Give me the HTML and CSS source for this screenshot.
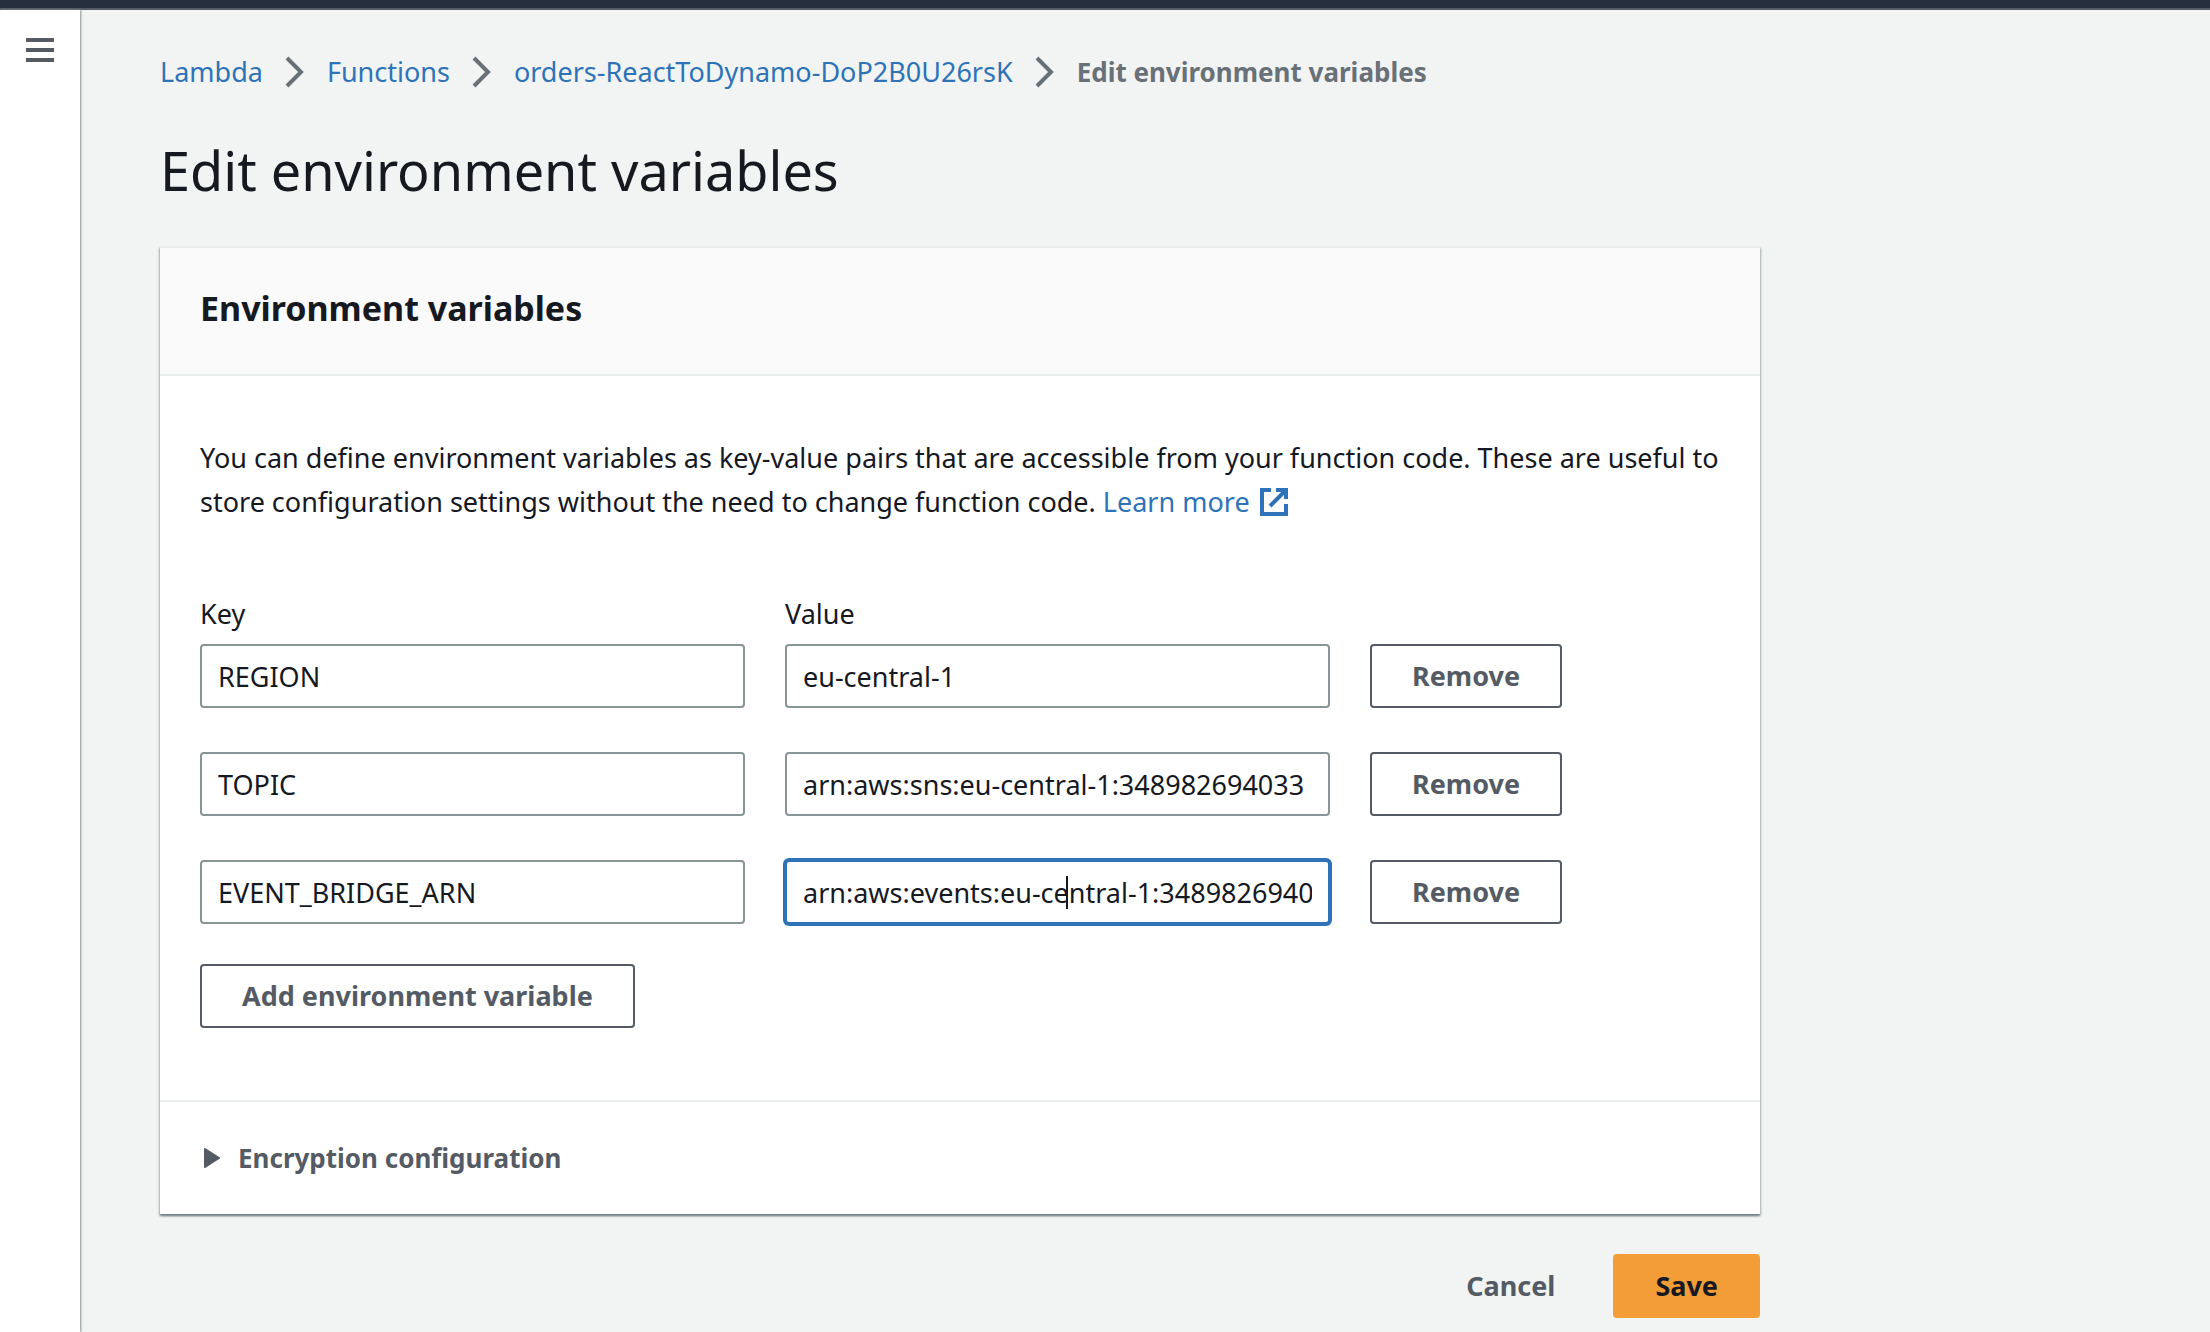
FILE: index.html
```html
<!DOCTYPE html>
<html lang="en">
<head>
<meta charset="utf-8">
<title>Edit environment variables - Lambda</title>
<link rel="stylesheet" href="styles.css">
</head>
<body>
<header class="topbar"></header>
<div class="layout">
  <nav class="sidebar" aria-label="Navigation">
    <button class="menu-button" type="button" aria-label="Open navigation">
      <svg width="28" height="24" viewBox="0 0 28 24"><path d="M0 2H28M0 12H28M0 22H28" stroke="currentColor" stroke-width="4"/></svg>
    </button>
  </nav>
  <main class="main">
    <nav class="breadcrumbs" aria-label="Breadcrumbs">
      <a href="#">Lambda</a>
      <svg class="chevron" viewBox="0 0 20 32"><path d="M2 2L16 16L2 30" fill="none" stroke="currentColor" stroke-width="4"/></svg>
      <a href="#">Functions</a>
      <svg class="chevron" viewBox="0 0 20 32"><path d="M2 2L16 16L2 30" fill="none" stroke="currentColor" stroke-width="4"/></svg>
      <a href="#">orders-ReactToDynamo-DoP2B0U26rsK</a>
      <svg class="chevron" viewBox="0 0 20 32"><path d="M2 2L16 16L2 30" fill="none" stroke="currentColor" stroke-width="4"/></svg>
      <span class="current">Edit environment variables</span>
    </nav>
    <h1>Edit environment variables</h1>
    <form class="form">
      <section class="card">
        <div class="card-header"><h2>Environment variables</h2></div>
        <div class="card-body">
          <p class="intro">You can define environment variables as key-value pairs that are accessible from your function code. These are useful to store configuration settings without the need to change function code. <a href="#">Learn more<svg class="external" viewBox="0 0 28 28"><path d="M11 2H2V26H26V16M16 2H26V11M10 18L26 2" fill="none" stroke="currentColor" stroke-width="4"/></svg></a></p>
          <div class="variables">
            <div class="row">
              <div class="field"><label for="key1">Key</label><input id="key1" type="text" value="REGION"></div>
              <div class="field"><label for="value1">Value</label><input id="value1" type="text" value="eu-central-1"></div>
              <button class="button" type="button">Remove</button>
            </div>
            <div class="row">
              <div class="field"><input aria-label="Key" type="text" value="TOPIC"></div>
              <div class="field"><input aria-label="Value" type="text" value="arn:aws:sns:eu-central-1:348982694033"></div>
              <button class="button" type="button">Remove</button>
            </div>
            <div class="row">
              <div class="field"><input aria-label="Key" type="text" value="EVENT_BRIDGE_ARN"></div>
              <div class="field"><input class="focused" aria-label="Value" type="text" value="arn:aws:events:eu-central-1:348982694033"><span class="caret"></span></div>
              <button class="button" type="button">Remove</button>
            </div>
          </div>
          <button class="button" type="button">Add environment variable</button>
        </div>
        <div class="card-footer">
          <button class="expander" type="button" aria-expanded="false"><svg class="triangle" viewBox="0 0 16 20"><path d="M1 1L15 10L1 19Z" fill="currentColor" stroke="currentColor" stroke-width="2" stroke-linejoin="round"/></svg>Encryption configuration</button>
        </div>
      </section>
      <div class="actions">
        <button class="button link" type="button">Cancel</button>
        <button class="button primary" type="button">Save</button>
      </div>
    </form>
  </main>
</div>
</body>
</html>
```
FILE: styles.css
```css
* { box-sizing: border-box; }
body {
  margin: 0;
  min-height: 100vh;
  display: flex;
  flex-direction: column;
  background: #f2f3f3;
  color: #16191f;
  font-family: "Noto Sans", "Open Sans", sans-serif;
  font-size: 27px;
  line-height: 44px;
}
a { color: #2e73b8; text-decoration: none; }
button, input { font: inherit; color: inherit; margin: 0; }
svg { display: block; flex: none; }
h1, h2, p { margin: 0; }
.topbar { height: 10px; background: #262f3d; border-bottom: 2px solid #545b64; }
.layout { display: flex; flex: 1; }
.sidebar { flex: none; width: 80px; padding: 28px 26px; background: #fff; box-shadow: 1px 0 2px #879596; }
.menu-button { display: block; padding: 0; border: 0; background: none; color: #545b64; }
.main { flex: 1; min-width: 0; padding: 40px 80px 12px; }
.breadcrumbs { display: flex; align-items: center; gap: 22px; }
.chevron { width: 20px; height: 32px; color: #687078; }
.current { color: #687078; font-size: 26px; font-weight: 700; }
h1 { margin: 40px 0; font-size: 54px; line-height: 72px; font-weight: 400; }
.form { max-width: 1600px; }
.card { background: #fff; border-top: 2px solid #eaeded; box-shadow: 0 2px 2px rgba(0, 28, 36, .3), 1px 2px 2px rgba(0, 28, 36, .2), -1px 2px 2px rgba(0, 28, 36, .2); }
.card-header { padding: 40px 40px 46px; background: #fafafa; border-bottom: 2px solid #eaeded; }
h2 { font-size: 34px; line-height: 40px; font-weight: 700; }
.card-body { padding: 60px 40px 72px; }
.external { display: inline-block; width: 28px; height: 28px; margin-left: 10px; vertical-align: -4px; }
.variables { display: grid; gap: 44px; padding: 68px 0 40px; }
.row { display: grid; grid-template-columns: 109fr 109fr 70fr; gap: 40px; align-items: end; justify-items: start; }
.field { position: relative; width: 100%; }
.field label { display: block; margin-bottom: 8px; }
.field input { display: block; width: 100%; height: 64px; padding: 0 16px; border: 2px solid #879596; border-radius: 4px; background: #fff; outline: 0; }
.field .focused { border-color: #2e73b8; box-shadow: 0 0 0 2px #2e73b8; }
.caret { position: absolute; top: 16px; left: 281px; width: 2px; height: 33px; background: #16191f; }
.button { height: 64px; padding: 0 40px; border: 2px solid #545b64; border-radius: 4px; background: #fff; color: #545b64; font-weight: 700; }
.card-footer { padding: 34px 44px; border-top: 2px solid #eaeded; }
.expander { display: flex; align-items: center; gap: 18px; padding: 0; border: 0; background: none; color: #545b64; font-size: 26px; font-weight: 700; }
.triangle { width: 16px; height: 20px; }
.actions { display: flex; justify-content: flex-end; gap: 16px; padding-top: 40px; }
.button.link { background: none; border-color: transparent; }
.button.primary { background: #f29d38; border-color: #f29d38; color: #16191f; }
```
